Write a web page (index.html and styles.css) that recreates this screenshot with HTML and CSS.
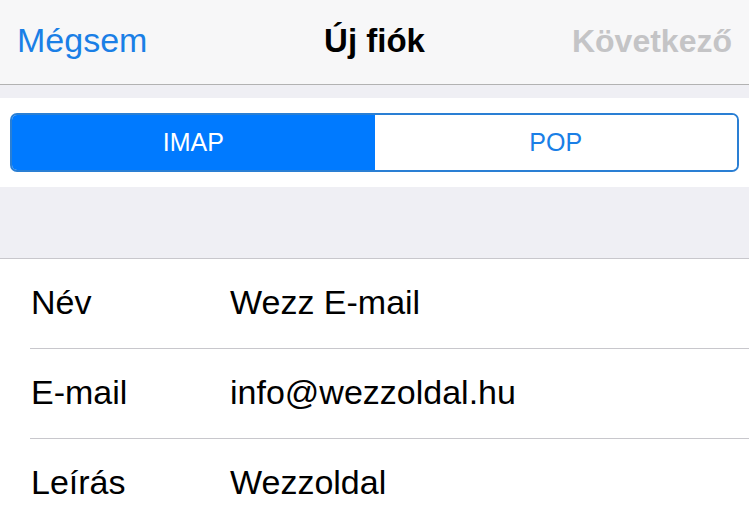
FILE: index.html
```html
<!DOCTYPE html>
<html lang="hu">
<head>
    <meta charset="UTF-8">
    <meta name="viewport" content="width=device-width, initial-scale=1.0">
    <title>Új fiók</title>
    <link rel="stylesheet" href="styles.css">
</head>
<body>
    <header class="nav-bar">
        <button class="nav-button nav-cancel">Mégsem</button>
        <h1 class="nav-title">Új fiók</h1>
        <button class="nav-button nav-next" disabled>Következő</button>
    </header>

    <section class="segment-section">
        <div class="segmented">
            <button class="segment active">IMAP</button>
            <button class="segment">POP</button>
        </div>
    </section>

    <ul class="form-list">
        <li class="form-row">
            <span class="form-label">Név</span>
            <span class="form-value">Wezz E-mail</span>
        </li>
        <li class="form-row">
            <span class="form-label">E-mail</span>
            <span class="form-value">info@wezzoldal.hu</span>
        </li>
        <li class="form-row">
            <span class="form-label">Leírás</span>
            <span class="form-value">Wezzoldal</span>
        </li>
    </ul>
</body>
</html>
```

FILE: styles.css
```css
* {
  box-sizing: border-box;
}

body {
  margin: 0;
  background: #efeff4;
  font-family: "Liberation Sans", Arial, sans-serif;
  color: #000;
}

.nav-bar {
  height: 85px;
  display: grid;
  grid-template-columns: 1fr auto 1fr;
  align-items: baseline;
  padding: 23px 17px 0 17px;
  background: #f7f7f8;
  border-bottom: 1px solid #b2b2b2;
}

.nav-button {
  font-family: inherit;
  background: transparent;
  border: none;
  padding: 0;
  line-height: 34px;
  cursor: pointer;
}

.nav-cancel {
  justify-self: start;
  font-size: 34px;
  color: #1a7fe6;
}

.nav-next {
  justify-self: end;
  font-size: 32px;
  font-weight: bold;
  color: #c4c4c6;
}

.nav-title {
  margin: 0;
  font-size: 33px;
  line-height: 34px;
  font-weight: bold;
}

.segment-section {
  margin-top: 13px;
  background: #fff;
  padding: 15px 10px;
}

.segmented {
  display: flex;
  height: 59px;
  border: 2px solid #2a7fd4;
  border-radius: 7px;
  overflow: hidden;
}

.segment {
  flex: 1;
  font-family: inherit;
  font-size: 25px;
  background: #fff;
  color: #1a7fe6;
  border: none;
  padding: 0;
}

.segment.active {
  background: #007aff;
  color: #fff;
}

.form-list {
  list-style: none;
  margin: 71px 0 0 0;
  padding: 0 0 0 30px;
  background: #fff;
  border-top: 1px solid #c8c7cc;
}

.form-row {
  display: flex;
  align-items: center;
  height: 90px;
  padding-bottom: 3px;
  font-size: 34px;
  line-height: 34px;
  border-bottom: 1px solid #c8c7cc;
}

.form-label {
  width: 200px;
  padding-left: 1px;
}
```
